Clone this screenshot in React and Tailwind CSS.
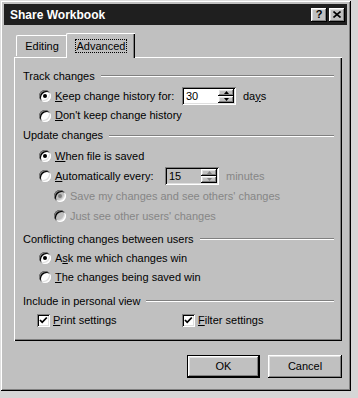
import React from 'react';

// classic win bevels
const raised = "shadow-[inset_-1px_-1px_0_#000,inset_1px_1px_0_#fff,inset_-2px_-2px_0_#808080,inset_2px_2px_0_#dfdfdf]";
const sunken = "shadow-[inset_1px_1px_0_#808080,inset_-1px_-1px_0_#fff,inset_2px_2px_0_#000,inset_-2px_-2px_0_#dfdfdf]";
const frame = "shadow-[inset_1px_1px_0_#dfdfdf,inset_-1px_-1px_0_#000,inset_2px_2px_0_#fff,inset_-2px_-2px_0_#808080]";

const Radio = ({ checked, disabled }) => (
  <span className={`w-[12px] h-[12px] rounded-full shrink-0 flex items-center justify-center ${sunken} ${disabled ? 'bg-[#c0c0c0]' : 'bg-white'}`}>
    {checked && <span className={`w-[4px] h-[4px] rounded-full ${disabled ? 'bg-[#808080]' : 'bg-black'}`} />}
  </span>
);

const Check = () => (
  <span className={`w-[13px] h-[13px] shrink-0 bg-white flex items-center justify-center ${sunken}`}>
    <svg width="9" height="9" viewBox="0 0 9 9">
      <polyline points="1,4 3.2,6.3 7.8,1.5" fill="none" stroke="#000" strokeWidth="1.8" />
    </svg>
  </span>
);

const Arrow = ({ up, disabled }) => (
  <span className={`h-[7px] flex items-center justify-center bg-[#c0c0c0] ${raised}`}>
    <svg width="5" height="3" viewBox="0 0 5 3">
      <polygon points={up ? "2.5,0 5,3 0,3" : "0,0 5,0 2.5,3"} fill={disabled ? '#808080' : '#000'} />
    </svg>
  </span>
);

const Spin = ({ value, disabled }) => (
  <div className={`w-[54px] h-[18px] flex p-[2px] ${sunken} ${disabled ? 'bg-[#c0c0c0]' : 'bg-white'}`}>
    <span className="flex-1 pl-[2px] leading-[14px] text-black">{value}</span>
    <div className="w-[16px] flex flex-col">
      <Arrow up disabled={disabled} />
      <Arrow disabled={disabled} />
    </div>
  </div>
);

const Group = ({ title, className = '' }) => (
  <div className={`flex items-center gap-[6px] pr-[6px] ${className}`}>
    <span>{title}</span>
    <div className="flex-1 h-[2px] border-t border-t-[#808080] border-b border-b-white" />
  </div>
);

const Option = ({ checked, disabled, children, className = '' }) => (
  <div className={`flex items-center gap-[4px] ${className}`}>
    <Radio checked={checked} disabled={disabled} />
    <span className={disabled ? 'text-[#868686]' : ''}>{children}</span>
  </div>
);

export default function App() {
  return (
    <div className="w-[358px] h-[398px] bg-[#d6d6d6] font-['Liberation_Sans',Arial,sans-serif] text-[11px] text-black">
      <div className={`w-[351px] h-[391px] bg-[#c0c0c0] p-[4px] flex flex-col ${frame}`}>
        {/* Title bar */}
        <div className="h-[21px] bg-[#1f1f1f] flex items-center pl-[6px] pr-[2px]">
          <span className="flex-1 text-white font-bold text-[12px]">Share Workbook</span>
          <div className="flex gap-[2px]">
            <span className={`w-[16px] h-[14px] bg-[#c0c0c0] flex items-center justify-center font-bold text-[11px] leading-none ${raised}`}>?</span>
            <span className={`w-[16px] h-[14px] bg-[#c0c0c0] flex items-center justify-center ${raised}`}>
              <svg width="8" height="7" viewBox="0 0 8 7">
                <path d="M0.5 0.5 L7.5 6.5 M7.5 0.5 L0.5 6.5" stroke="#000" strokeWidth="1.6" />
              </svg>
            </span>
          </div>
        </div>

        <div className="flex-1 flex flex-col pt-[8px] pl-[10px] pr-[5px]">
          {/* Tabs */}
          <div className="h-[24px] flex items-end pl-[2px] relative z-10">
            <div className="w-[51px] h-[21px] border-l border-t border-white rounded-tl-[2px] shadow-[inset_-1px_0_0_#000] flex items-center justify-center mb-[1px]">
              Editing
            </div>
            <div className="w-[69px] h-[25px] -mb-[1px] -ml-[1px] bg-[#c0c0c0] border-l border-t border-white rounded-tl-[2px] shadow-[inset_-1px_0_0_#000,inset_-2px_0_0_#808080] flex items-center justify-center">
              <span className="border border-dotted border-black px-[1px] leading-[12px]">Advanced</span>
            </div>
          </div>

          {/* Panel */}
          <div className="h-[284px] border-l border-t border-white shadow-[inset_-1px_-1px_0_#000,inset_-2px_-2px_0_#808080] pt-[8px] pl-[8px] pr-[2px] flex flex-col">
            <Group title="Track changes" className="h-[20px]" />
            <div className="h-[20px] flex items-center pl-[16px]">
              <Option checked className="w-[143px]"><u>K</u>eep change history for:</Option>
              <Spin value="30" />
              <span className="ml-[7px]">da<u>y</u>s</span>
            </div>
            <Option className="h-[19px] pl-[16px]"><u>D</u>on't keep change history</Option>

            <Group title="Update changes" className="h-[21px]" />
            <Option checked className="h-[20px] pl-[16px]"><u>W</u>hen file is saved</Option>
            <div className="h-[20px] flex items-center pl-[16px]">
              <Option className="w-[126px]"><u>A</u>utomatically every:</Option>
              <Spin value="15" disabled />
              <span className="ml-[7px] text-[#868686]">minutes</span>
            </div>
            <Option checked disabled className="h-[20px] pl-[31px]">Save my changes and see others' changes</Option>
            <Option disabled className="h-[20px] pl-[31px]">Just see other users' changes</Option>

            <Group title="Conflicting changes between users" className="h-[20px] mt-[3px]" />
            <Option checked className="h-[18px] pl-[16px]">A<u>s</u>k me which changes win</Option>
            <Option className="h-[20px] pl-[16px]"><u>T</u>he changes being saved win</Option>

            <Group title="Include in personal view" className="h-[20px] mt-[4px]" />
            <div className="h-[18px] flex items-center pl-[14px]">
              <div className="w-[145px] flex items-center gap-[3px]">
                <Check />
                <span><u>P</u>rint settings</span>
              </div>
              <div className="flex items-center gap-[3px]">
                <Check />
                <span><u>F</u>ilter settings</span>
              </div>
            </div>
          </div>

          {/* Buttons */}
          <div className="flex justify-end gap-[8px] mt-[14px]">
            <div className="w-[73px] h-[23px] border border-black">
              <div className={`w-full h-full flex items-center justify-center ${raised}`}>OK</div>
            </div>
            <div className={`w-[74px] h-[23px] flex items-center justify-center ${raised}`}>Cancel</div>
          </div>
        </div>
      </div>
    </div>
  );
}
